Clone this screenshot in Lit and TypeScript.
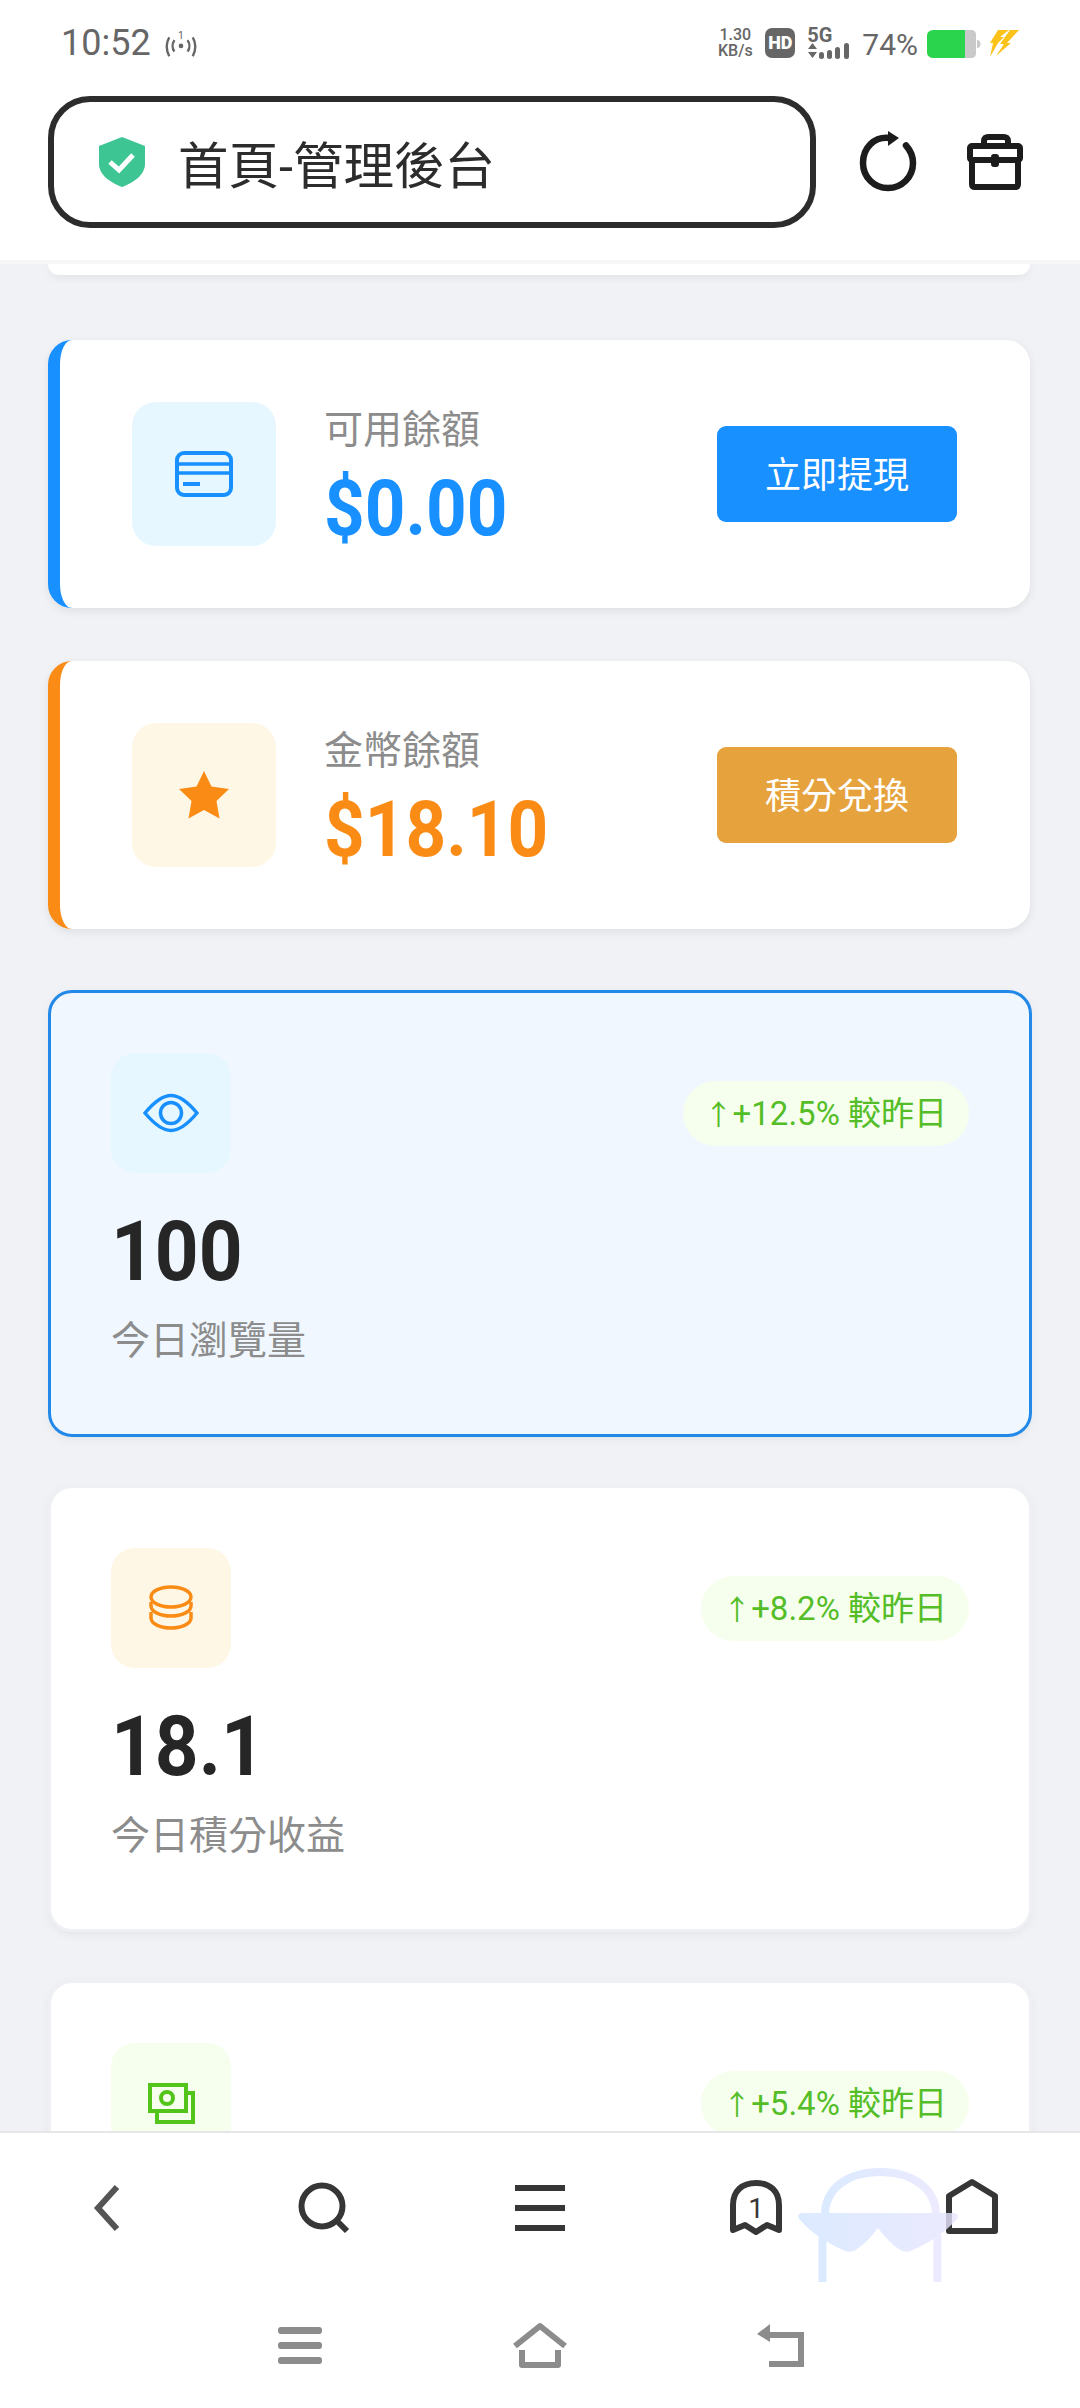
import { LitElement, html, css, svg } from "lit";
import { customElement } from "lit/decorators.js";

const BLUE = "#1890ff";
const ORANGE = "#fa8c16";
const GREEN = "#52c41a";

const cardIcon = html`<svg width="60" height="48" viewBox="0 0 60 48" fill="none" stroke=${BLUE} stroke-width="4">
  <rect x="3" y="3" width="54" height="42" rx="7"></rect>
  <path d="M3 14H57M3 23H57" stroke-width="3.5"></path>
  <path d="M9 34H26"></path>
</svg>`;

const starIcon = html`<svg width="52" height="50" viewBox="0 0 52 50" fill=${ORANGE}>
  <polygon points="26,1 33.5,16.5 51,19 38.5,31 41.5,48.5 26,40 10.5,48.5 13.5,31 1,19 18.5,16.5"></polygon>
</svg>`;

const eyeIcon = html`<svg width="56" height="40" viewBox="0 0 56 40" fill="none" stroke=${BLUE} stroke-width="3.5">
  <path d="M2 20C12 8 20 2.500 28 2.500S44 8 54 20C44 32 36 37.500 28 37.500S12 32 2 20Z"></path>
  <circle cx="28" cy="20" r="10.500"></circle>
</svg>`;

const coinsIcon = html`<svg width="46" height="46" viewBox="0 0 46 46" fill="none" stroke=${ORANGE} stroke-width="3.5">
  <ellipse cx="23" cy="12" rx="20" ry="10"></ellipse>
  <path d="M3 17v4c0 5.500 9 10 20 10s20-4.500 20-10v-4"></path>
  <path d="M3 27v6c0 5.500 9 10 20 10s20-4.500 20-10v-6"></path>
</svg>`;

const moneyIcon = html`<svg width="48" height="48" viewBox="0 0 48 48" fill="none" stroke=${GREEN} stroke-width="4">
  <rect x="3" y="6" width="36" height="26"></rect>
  <circle cx="20" cy="19" r="6"></circle>
  <path d="M40 14H46V43H10V33"></path>
</svg>`;

const balances = [
  { tone: "blue", icon: cardIcon, label: "可用餘額", value: "$0.00", action: "立即提現" },
  { tone: "orange", icon: starIcon, label: "金幣餘額", value: "$18.10", action: "積分兌換" },
];

const stats = [
  { tone: "blue", icon: eyeIcon, trend: "+12.5% 較昨日", value: "100", label: "今日瀏覽量", active: true },
  { tone: "orange", icon: coinsIcon, trend: "+8.2% 較昨日", value: "18.1", label: "今日積分收益", active: false },
  // this one runs under the bottom bar, only its top shows
  { tone: "green", icon: moneyIcon, trend: "+5.4% 較昨日", value: "", label: "", active: false },
];

@customElement("app-root")
export class AppRoot extends LitElement {
  static styles = css`
    :host {
      display: block;
      width: 1080px;
      height: 2408px;
      font-family: Roboto, "Noto Sans CJK TC", sans-serif;
    }
    .page {
      position: relative;
      height: 2408px;
      display: flex;
      flex-direction: column;
      background: #f0f2f5;
      overflow: hidden;
    }

    .status {
      box-sizing: border-box;
      height: 96px;
      flex: none;
      display: flex;
      align-items: center;
      background: #fff;
      color: #666;
      padding: 0 61px 6px;
    }
    .time { font-size: 36px; line-height: 40px; margin-top: -5px; }
    .antenna { margin-left: 14px; margin-top: -2px; }
    .status-right { margin-left: auto; display: flex; align-items: center; }
    .speed {
      width: 36px;
      font-size: 16px;
      line-height: 16px;
      font-weight: 500;
      text-align: center;
      margin-top: -4px;
      white-space: nowrap;
    }
    .hd {
      width: 30px;
      height: 30px;
      margin: -4px 0 0 12px;
      border-radius: 7px;
      background: #666;
      color: #fff;
      font-size: 18px;
      font-weight: 900;
      line-height: 30px;
      text-align: center;
    }
    .net { width: 44px; margin: -4px 0 0 12px; height: 30px; }
    .net span {
      display: block;
      font-size: 20px;
      line-height: 14px;
      font-weight: 700;
    }
    .net svg { display: block; }
    .pct { font-size: 30px; margin: -2px 0 0 11px; }
    .battery { margin: -2px 0 0 9px; }
    .bolt { margin: -4px 0 0 8px; }

    .header {
      flex: none;
      display: flex;
      align-items: center;
      background: #fff;
      padding: 0 0 32px 48px;
      border-bottom: 4px solid #f6f6f6;
    }
    .url {
      box-sizing: border-box;
      width: 768px;
      height: 132px;
      border: 6px solid #2c2c2c;
      border-radius: 42px;
      display: flex;
      align-items: center;
      padding-left: 44px;
      gap: 32px;
      font-size: 50.5px;
      color: #2c2c2c;
    }
    .reload { margin-left: 42px; }
    .toolbox { margin-left: 47px; }

    .scroll { flex: 1; min-height: 0; overflow: hidden; padding: 0 48px; }
    .peek {
      height: 11px;
      margin-right: 2px;
      background: #fff;
      border-radius: 0 0 24px 24px;
      box-shadow: 0 3px 8px rgba(0, 0, 0, 0.06);
      margin-bottom: 65px;
    }
    .balances { display: flex; flex-direction: column; gap: 53px; margin: 0 2px 61px 0; }
    .balance {
      box-sizing: border-box;
      height: 268px;
      background: #fff;
      border-left: 12px solid;
      border-radius: 24px;
      box-shadow: 0 3px 10px rgba(0, 0, 0, 0.08);
      display: flex;
      align-items: center;
      padding: 0 73px 0 72px;
    }
    .balance.blue { border-color: #1890ff; }
    .balance.orange { border-color: #fa8c16; }
    .icon-box {
      flex: none;
      display: flex;
      align-items: center;
      justify-content: center;
      border-radius: 24px;
    }
    .icon-box.blue { background: #e6f7ff; }
    .icon-box.orange { background: #fff7e6; }
    .icon-box.green { background: #f6ffed; }
    .balance .icon-box { width: 144px; height: 144px; }
    .info { margin: 14px 0 0 48px; flex: 1; }
    .info .label { font-size: 39px; line-height: 44px; color: #8c8c8c; }
    /* digits in the reference are narrower than the installed Roboto bold */
    .value { transform: scaleX(0.91); transform-origin: left center; font-weight: 700; }
    .info .value { font-size: 78px; line-height: 90px; margin-top: 12px; }
    .blue .value { color: #1890ff; }
    .orange .value { color: #fa8c16; }
    .action {
      box-sizing: border-box;
      flex: none;
      width: 240px;
      height: 96px;
      padding-bottom: 4px;
      border-radius: 9px;
      color: #fff;
      font-size: 36px;
      display: flex;
      align-items: center;
      justify-content: center;
    }
    .action.blue { background: #1890ff; }
    .action.orange { background: #e6a23c; }

    .stats { display: flex; flex-direction: column; gap: 48px; }
    .stat {
      box-sizing: border-box;
      height: 447px;
      background: #fff;
      border: 3px solid #eef0f3;
      border-radius: 24px;
      box-shadow: 0 3px 10px rgba(0, 0, 0, 0.05);
      padding: 60px;
    }
    .stat.active { background: #f0f7ff; border-color: #2389e8; }
    .stat-top { display: flex; justify-content: space-between; align-items: center; margin-bottom: 26px; }
    .stat .icon-box { width: 120px; height: 120px; }
    .trend {
      height: 65px;
      padding: 0 22px;
      border-radius: 33px;
      background: #f6ffed;
      color: #54bd27;
      font-size: 33px;
      line-height: 65px;
    }
    .arrow { font-size: 28px; }
    .stat .value { font-size: 84px; line-height: 106px; color: #262626; }
    .stat .label { font-size: 39px; line-height: 72px; color: #8c8c8c; }

    .bottom { flex: none; background: #fff; border-top: 2px solid #e6e6e6; }
    .nav { height: 149px; display: grid; grid-template-columns: repeat(5, 1fr); }
    .sys { height: 126px; display: grid; grid-template-columns: repeat(3, 240px); justify-content: center; }
    .cell { display: flex; align-items: center; justify-content: center; }
    .back { margin-right: 4px; }
    .burger { display: flex; flex-direction: column; gap: 14px; width: 50px; }
    .burger i { display: block; height: 6px; background: #363636; }
    .burger.soft { width: 44px; gap: 8px; }
    .burger.soft i { height: 7px; background: #8c8c8c; border-radius: 3px; }

    .watermark { position: absolute; left: 795px; top: 2165px; }
  `;

  private renderStatus() {
    return html`<div class="status">
      <span class="time">10:52</span>
      <svg class="antenna" width="32" height="28" viewBox="0 0 34 28" fill="none" stroke="#666" stroke-width="2.500">
        <text x="17" y="9" font-size="11" fill="#666" stroke="none" text-anchor="middle">1</text>
        <circle cx="17" cy="16" r="2.500" fill="#666" stroke="none"></circle>
        <path d="M10 10C7.500 14 7.500 19 10 22M24 10C26.500 14 26.500 19 24 22"></path>
        <path d="M4.500 7C1 13 1 20 4.500 27M29.500 7C33 13 33 20 29.500 27"></path>
      </svg>
      <div class="status-right">
        <div class="speed">1.30<br />KB/s</div>
        <div class="hd">HD</div>
        <div class="net">
          <span>5G</span>
          <svg width="44" height="17" viewBox="0 0 44 17" fill="#666">
            <path d="M1 7L5.500 1L10 7ZM1 10L5.500 16L10 10Z"></path>
            <rect x="12" y="10" width="5" height="7" rx="2.500"></rect>
            <rect x="20" y="8" width="5" height="9" rx="2.500"></rect>
            <rect x="28" y="5" width="5" height="12" rx="2.500"></rect>
            <rect x="37" y="1" width="5" height="16" rx="2.500"></rect>
          </svg>
        </div>
        <span class="pct">74%</span>
        <svg class="battery" width="54" height="28" viewBox="0 0 54 28">
          <path d="M38 0H44C47.500 0 49 2 49 5V23C49 26 47.500 28 44 28H38Z" fill="#c9c9c9"></path>
          <path d="M50 10C52.500 10 53.500 12 53.500 14S52.500 18 50 18Z" fill="#c9c9c9"></path>
          <path d="M7 0H38V28H7C3 28 0 26 0 22V6C0 2 3 0 7 0Z" fill="#2ad44c"></path>
        </svg>
        <svg class="bolt" width="30" height="27" viewBox="0 0 30 27" fill="#fbc21a">
          <path d="M9 0H20L11 7H15L9 13L1 27L4 13H1L9 0Z"></path>
          <path d="M21 0H30L18 13H22L7 26L15 14H11L21 0Z"></path>
        </svg>
      </div>
    </div>`;
  }

  private renderHeader() {
    return html`<div class="header">
      <div class="url">
        <svg width="48" height="52" viewBox="0 0 48 52">
          <path d="M24 1L47 10V28C47 39 35 47 24 51C13 47 1 39 1 28V10Z" fill="#3ec594"></path>
          <path d="M12 26L21 34L35 19" fill="none" stroke="#fff" stroke-width="5"></path>
        </svg>
        <span>首頁-管理後台</span>
      </div>
      <svg class="reload" width="60" height="64" viewBox="0 0 60 64" fill="none" stroke="#1c1c1c" stroke-width="6.500" stroke-linecap="round">
        <path d="M32 8C16 6 5 18 5 33C5 47 16 58 30 58C44 58 55 47 55 33C55 26 52 20 48 15.500"></path>
        <path d="M30 1L41 8L30 16Z" fill="#1c1c1c" stroke="none"></path>
      </svg>
      <svg class="toolbox" width="60" height="60" viewBox="0 0 60 60" fill="none" stroke="#1c1c1c" stroke-width="6" stroke-linejoin="round">
        <path d="M19 14V9C19 6 21 5 23 5H39C41 5 43 6 43 9V14"></path>
        <rect x="5" y="14" width="50" height="14" rx="2"></rect>
        <path d="M7 28V52C7 54 8 55 10 55H50C52 55 53 54 53 52V28"></path>
        <rect x="26" y="22" width="8" height="13" rx="3" fill="#1c1c1c" stroke="none"></rect>
      </svg>
    </div>`;
  }

  private renderBottom() {
    return html`<div class="bottom">
      <div class="nav">
        <div class="cell">
          <svg class="back" width="30" height="48" viewBox="0 0 30 48" fill="none" stroke="#555" stroke-width="6">
            <path d="M26 3L7 24L26 45"></path>
          </svg>
        </div>
        <div class="cell">
          <svg width="52" height="52" viewBox="0 0 52 52" fill="none" stroke="#363636" stroke-width="6">
            <circle cx="24" cy="24" r="20.500"></circle>
            <path d="M39 39L49 49"></path>
          </svg>
        </div>
        <div class="cell">
          <div class="burger"><i></i><i></i><i></i></div>
        </div>
        <div class="cell">
          <svg width="56" height="60" viewBox="0 0 56 60" fill="none" stroke="#363636" stroke-width="6" stroke-linejoin="round">
            <path d="M5 52V27C5 13 14 5 28 5C42 5 51 13 51 27V52L39 47L28 54L17 47Z"></path>
            <text x="28" y="40" font-size="28" fill="#363636" stroke="none" text-anchor="middle">1</text>
          </svg>
        </div>
        <div class="cell">
          <svg width="56" height="60" viewBox="0 0 56 60" fill="none" stroke="#363636" stroke-width="6" stroke-linejoin="round">
            <path d="M28 4L51 18V53H5V18Z"></path>
          </svg>
        </div>
      </div>
      <div class="sys">
        <div class="cell">
          <div class="burger soft"><i></i><i></i><i></i></div>
        </div>
        <div class="cell">
          <svg width="60" height="48" viewBox="0 0 60 48" fill="none" stroke="#8c8c8c" stroke-width="6" stroke-linejoin="round">
            <path d="M5 25L30 5L55 25"></path>
            <path d="M12 29V44H48V29"></path>
          </svg>
        </div>
        <div class="cell">
          <svg width="52" height="46" viewBox="0 0 52 46" fill="none" stroke="#8c8c8c" stroke-width="6">
            <path d="M14 13H47V42H15"></path>
            <path d="M3 12L16 2V20Z" fill="#8c8c8c" stroke="none"></path>
          </svg>
        </div>
      </div>
    </div>`;
  }

  render() {
    return html`<div class="page">
      ${this.renderStatus()} ${this.renderHeader()}
      <div class="scroll">
        <div class="peek"></div>
        <div class="balances">
          ${balances.map(
            (b) => html`<div class="balance ${b.tone}">
              <div class="icon-box ${b.tone}">${b.icon}</div>
              <div class="info">
                <div class="label">${b.label}</div>
                <div class="value">${b.value}</div>
              </div>
              <div class="action ${b.tone}">${b.action}</div>
            </div>`
          )}
        </div>
        <div class="stats">
          ${stats.map(
            (s) => html`<div class="stat ${s.active ? "active" : ""}">
              <div class="stat-top">
                <div class="icon-box ${s.tone}">${s.icon}</div>
                <div class="trend"><span class="arrow">↑</span>${s.trend}</div>
              </div>
              <div class="value">${s.value}</div>
              <div class="label">${s.label}</div>
            </div>`
          )}
        </div>
      </div>
      ${this.renderBottom()}
      <svg class="watermark" width="166" height="120" viewBox="0 0 166 120" fill="none">
        <defs>
          <linearGradient id="wm" x1="0" x2="1" y1="0" y2="0">
            <stop offset="0" stop-color="#d3e6ff"></stop>
            <stop offset="1" stop-color="#e8e6ff"></stop>
          </linearGradient>
        </defs>
        <g opacity="0.8">
          ${svg`<path d="M30 50C30 24 52 7 85 7C118 7 141 24 141 50" stroke="url(#wm)" stroke-width="8"></path>
          <path d="M27.500 70V117M142.500 70V117" stroke="url(#wm)" stroke-width="8"></path>
          <path d="M8 48H158C163 48 164 52 161 55C150 68 130 80 118 85C112 88 108 87 104 84C96 79 90 72 83 63C76 72 70 79 62 84C58 87 54 88 48 85C36 80 16 68 5 55C2 52 3 48 8 48Z" fill="url(#wm)"></path>`}
        </g>
      </svg>
    </div>`;
  }
}
